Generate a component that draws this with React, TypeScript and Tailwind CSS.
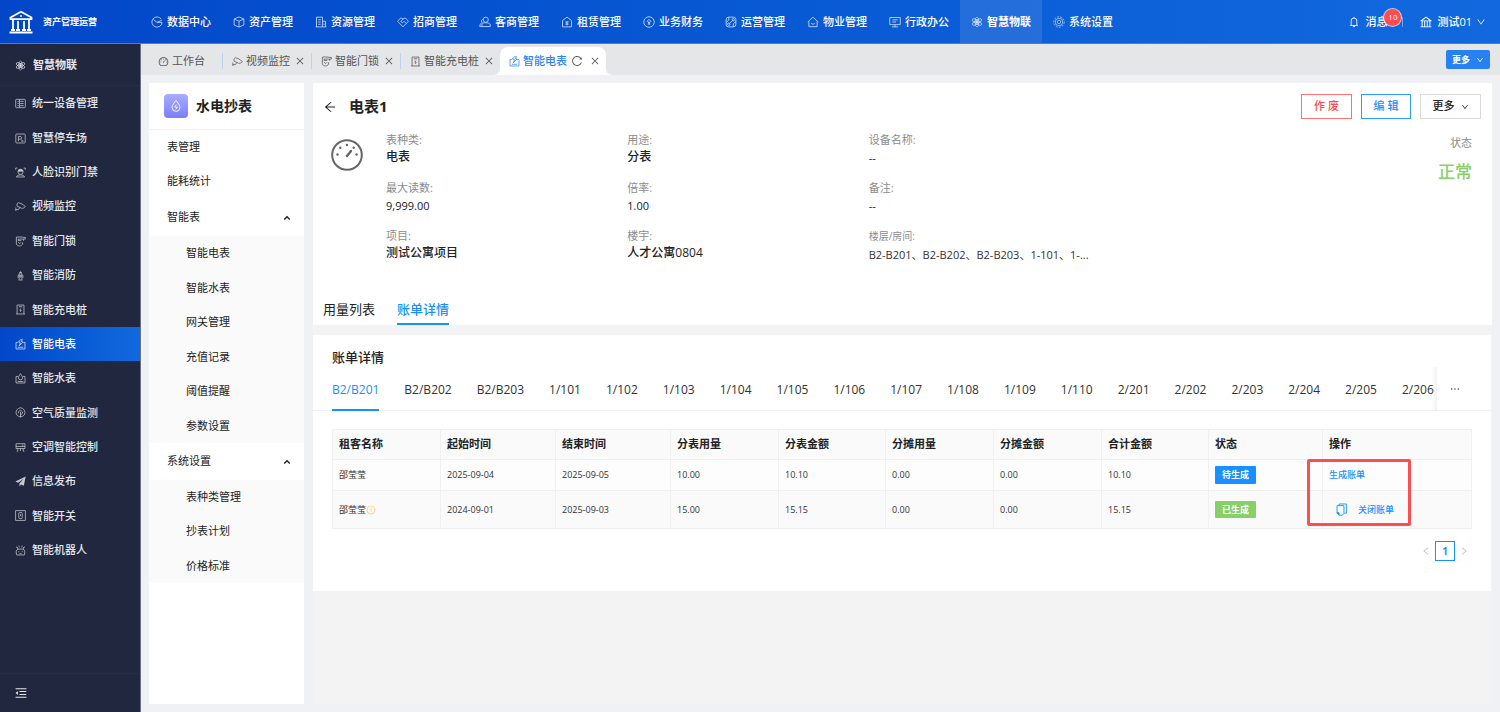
import { ReactNode, useState } from "react";
import {
  AiOutlineArrowLeft,
  AiOutlineBank,
  AiOutlineBell,
  AiOutlineClose,
  AiOutlineDashboard,
  AiOutlineDown,
  AiOutlineEllipsis,
  AiOutlineExclamationCircle,
  AiOutlineLeft,
  AiOutlineMenuFold,
  AiOutlineReload,
  AiOutlineRight,
} from "react-icons/ai";
import clsx from "clsx";

const shapes: Record<string, ReactNode> = {
  pie: (
    <>
      <path d="M13.500 4A6.800 6.800 0 1 0 14.800 8.500" />
      <path d="M3 4.500 8 8.500l6.500-3M8 8.500h6.500" />
    </>
  ),
  cube: (
    <>
      <path d="M8 1.200 14.500 4v8L8 14.800 1.500 12V4z" />
      <path d="M1.500 4 8 7l6.500-3M8 7v7.800" />
    </>
  ),
  building: (
    <>
      <path d="M2 14.500v-13h8v13M10 7h4v7.500M.8 14.500h14.400" />
      <path d="M4.300 5h3.400M4.300 8h3.400M4.300 11h3.400M12 10v2" />
    </>
  ),
  handshake: (
    <>
      <path d="M.8 7 5 2.500 8 4l3-1.500L15.200 7 8 14.500z" />
      <path d="M8 4 5 7.500 7.500 9 9.500 7l3 3" />
    </>
  ),
  tenant: (
    <>
      <circle cx="9" cy="5" r="3.400" />
      <path d="M4 14h11v-2.500c-1-2-3-2.500-6-2.500s-4 .5-5 2zM5 4.500C2.800 5 2.800 8 4.500 8.500 2.500 9.500 1 11 1 14h3" />
    </>
  ),
  house: (
    <>
      <path d="M2 14.500V6L8 1.500 14 6v8.500z" />
      <path d="M6 6.500 8 8.500l2-2M8 8.500v4M6 9.200h4M6 11h4" />
    </>
  ),
  money: (
    <>
      <circle cx="8" cy="8" r="7" />
      <path d="M5.500 7 8 4.500 10.500 7 8 9.500zM8 7v5M6.500 10.500h3" />
    </>
  ),
  ops: (
    <>
      <path d="M5 1.500h7a3 3 0 0 1 2.500 3v6.500a3.500 3.500 0 0 1-3.500 3.500H4.500a3 3 0 0 1-3-3V5A3.500 3.500 0 0 1 5 1.500z" />
      <path d="M5 1.500v4l-3.500 3M11 14.500v-4l3.500-3M6 10l4-4" />
      <circle cx="5" cy="11" r="1.600" />
      <circle cx="11" cy="5" r="1.600" />
    </>
  ),
  home: (
    <>
      <path d="M1 8 8 1.500 15 8M2.500 7v7.200h11V7" />
      <path d="M5.500 9.500c1 2 4 2 5 0" />
    </>
  ),
  screen: (
    <>
      <path d="M1 2h14v9.500H1zM8 11.500v3M4 14.500h8" />
      <path d="M4.500 5.200h7M4.500 8h5" />
    </>
  ),
  atom: (
    <g strokeWidth="0.9">
      <ellipse cx="8" cy="8" rx="7" ry="2.600" transform="rotate(30 8 8)" />
      <ellipse cx="8" cy="8" rx="7" ry="2.600" transform="rotate(-30 8 8)" />
      <ellipse cx="8" cy="8" rx="2.600" ry="6.500" />
      <circle cx="8" cy="8" r="1.600" fill="currentColor" />
    </g>
  ),
  gear: (
    <g strokeWidth="0.9">
      <circle cx="8" cy="8" r="7" strokeDasharray="2.600 1.600" />
      <circle cx="8" cy="8" r="5" />
      <circle cx="8" cy="8" r="2.300" />
    </g>
  ),
  device: (
    <>
      <rect x="1" y="2" width="14" height="12" rx="1" />
      <path d="M3.500 5h2M7.500 5h5M3.500 8h2M7.500 8h5M3.500 11h2M7.500 11h5M6.500 2v12" />
    </>
  ),
  parking: (
    <>
      <rect x="1.200" y="1.500" width="13.600" height="13" rx="1" />
      <path d="M5 12V5h2.500a2 2 0 0 1 0 4H5M9 11.800h3.500M9 9.500l2 1.500" />
    </>
  ),
  face: (
    <>
      <path d="M1 4V1.500h2.500M12.500 1.500H15V4M2 14.500c1-2 3-3 6-3s5 1 6 3z" />
      <circle cx="8" cy="7" r="3.800" />
      <path d="M4.500 6C5 3 11 3 11.500 6z" fill="currentColor" />
    </>
  ),
  camera: (
    <>
      <path d="M4.500 2.500c4 .5 7 2.500 10.500 5.500-1 2-3.500 3-5.500 2.500L3 7.500c-.5-2 0-4 1.500-5z" />
      <path d="M7 9.500 5 12.500H1.200M1.200 9.500v5" />
    </>
  ),
  lock: (
    <>
      <path d="M2 1.500h9M2 1.500v10c0 1.500 2.500 3 4.500 3s4.500-1.500 4.500-3V9" />
      <path d="M4.500 4.500H15V2H11M12.500 4.500V7M4.500 4.500v2H9M4.500 9 7 11l2-2" />
    </>
  ),
  fire: (
    <>
      <path d="M5 14.500h6M6 14V6c0-2 4-2 4 0v8M8 4.500V2M6 3.500h4M4.500 7.500h7M4.500 8v3.500M11.500 8v3.500" />
      <circle cx="8" cy="9.500" r="1" />
    </>
  ),
  charger: (
    <>
      <path d="M3 14.500v-13h10v13M1.500 14.500h13M5.500 4h5" />
      <path d="M8.500 6.500 7 9h2L7.800 11.500" />
    </>
  ),
  meter: (
    <>
      <path d="M4 5H1.500v9.500h13V5H12M4 12h8" />
      <path d="M8 1 5 4.500l3 1L6 10l5.500-5.500L9 3.500 11 1z" />
    </>
  ),
  water: (
    <>
      <path d="M4.500 5H1.500v9.500h13V5h-3M4 12.300h8" />
      <path d="M8 1C6.500 3.500 5 5 5 7a3 3 0 0 0 6 0c0-2-1.500-3.500-3-6z" />
    </>
  ),
  air: (
    <>
      <path d="M8 1c4 1 6.500 3.500 6.500 7S12 13.500 8 14.500C4 13.500 1.500 11.500 1.500 8S4 2 8 1z" />
      <path d="M8 15V7M8 11.500l3-2.500V7L8 4.500 5 7v2" />
    </>
  ),
  ac: (
    <>
      <path d="M1.500 2.500h13v7h-13zM1.500 6.500h13M10 4.700h2" />
      <path d="M4 9.500v4H2.500M8 9.500V13M12 9.500v4h1.500" />
    </>
  ),
  send: <path d="M15.500.8.500 8l4 1.800L12.500 4l-6 7v4.200l2.300-3 4 2z" fill="currentColor" stroke="none" />,
  toggle: (
    <>
      <rect x="1" y="1" width="14" height="14" />
      <rect x="5.500" y="3.500" width="5" height="9" rx="1.500" />
      <path d="M8 6v3" />
    </>
  ),
  robot: (
    <>
      <path d="M2.500 14.500c-1.500-4-1-7.500 2-8.500h7c3 1 3.500 4.500 2 8.500z" />
      <path d="M4.500 6 3 3M11.500 6 13 3M1.500 2.500l2 1.500M14.500 2.500l-2 1.500M6.500 3.500 5.500 1M9.500 3.500l1-2.500M5.500 9v1.500M10.500 9v1.500M6.500 12.500h3" />
    </>
  ),
  copy: (
    <>
      <path d="M5 3V1.200h9v11.300h-2.500" />
      <path d="M2.500 3.200H11v9.500L9 15H5l-2.500-2.500z" />
      <path d="M2.500 12H5v3z" fill="currentColor" />
    </>
  ),
};

const Icon = ({ name, className }: { name: string; className?: string }) => (
  <svg
    viewBox="0 0 16 16"
    fill="none"
    stroke="currentColor"
    strokeWidth="1.1"
    aria-hidden="true"
    className={clsx("shrink-0", className)}
  >
    {shapes[name]}
  </svg>
);

const topNav = [
  { icon: "pie", label: "数据中心" },
  { icon: "cube", label: "资产管理" },
  { icon: "building", label: "资源管理" },
  { icon: "handshake", label: "招商管理" },
  { icon: "tenant", label: "客商管理" },
  { icon: "house", label: "租赁管理" },
  { icon: "money", label: "业务财务" },
  { icon: "ops", label: "运营管理" },
  { icon: "home", label: "物业管理" },
  { icon: "screen", label: "行政办公" },
  { icon: "atom", label: "智慧物联" },
  { icon: "gear", label: "系统设置" },
];

const sideNav = [
  { icon: "device", label: "统一设备管理" },
  { icon: "parking", label: "智慧停车场" },
  { icon: "face", label: "人脸识别门禁" },
  { icon: "camera", label: "视频监控" },
  { icon: "lock", label: "智能门锁" },
  { icon: "fire", label: "智能消防" },
  { icon: "charger", label: "智能充电桩" },
  { icon: "meter", label: "智能电表" },
  { icon: "water", label: "智能水表" },
  { icon: "air", label: "空气质量监测" },
  { icon: "ac", label: "空调智能控制" },
  { icon: "send", label: "信息发布" },
  { icon: "toggle", label: "智能开关" },
  { icon: "robot", label: "智能机器人" },
];

const openTabs = [
  { icon: "camera", label: "视频监控" },
  { icon: "lock", label: "智能门锁" },
  { icon: "charger", label: "智能充电桩" },
];

const details = [
  { label: "表种类:", value: "电表" },
  { label: "用途:", value: "分表" },
  { label: "设备名称:", value: "--" },
  { label: "最大读数:", value: "9,999.00" },
  { label: "倍率:", value: "1.00" },
  { label: "备注:", value: "--" },
  { label: "项目:", value: "测试公寓项目" },
  { label: "楼宇:", value: "人才公寓0804" },
];

const rooms = [
  "B2/B201", "B2/B202", "B2/B203", "1/101", "1/102", "1/103", "1/104", "1/105", "1/106", "1/107",
  "1/108", "1/109", "1/110", "2/201", "2/202", "2/203", "2/204", "2/205", "2/206",
];

const columns = [
  { title: "租客名称", width: "w-[108px]" },
  { title: "起始时间", width: "w-[115px]" },
  { title: "结束时间", width: "w-[115px]" },
  { title: "分表用量", width: "w-[108px]" },
  { title: "分表金额", width: "w-[107px]" },
  { title: "分摊用量", width: "w-[108px]" },
  { title: "分摊金额", width: "w-[108px]" },
  { title: "合计金额", width: "w-[107px]" },
  { title: "状态", width: "w-[114px]" },
  { title: "操作", width: "" },
];

const Header = () => (
  <header className="flex h-11 items-center border-b border-[#3f7fe4] bg-linear-to-r from-[#0347c9] to-[#1269de] text-white">
    <div className="flex w-[140px] shrink-0 items-center gap-2.5 pl-[9px]">
      <svg viewBox="0 0 24 24" className="size-6" fill="none" stroke="currentColor" strokeWidth="1.8" aria-hidden="true">
        <path d="M1.500 7.500 12 1.800 22.500 7.500v1.700h-21zM.5 22.500h23M4 10v10M9 11v9M15 11v9M20 10v10M2 20h4M7 20h4M13 20h4M18 20h4" />
        <circle cx="12" cy="6" r="1" fill="currentColor" stroke="none" />
      </svg>
      <span className="text-[9px] font-bold">资产管理运营</span>
    </div>
    <nav className="flex h-full">
      {topNav.map((item) => (
        <a
          key={item.label}
          href="#"
          className={clsx(
            "flex w-[82px] items-center justify-center gap-1 pt-px text-[11px] whitespace-nowrap",
            item.label === "智慧物联" ? "bg-white/10 font-bold" : "font-medium"
          )}
        >
          <Icon name={item.icon} className="size-3 opacity-80" />
          {item.label}
        </a>
      ))}
    </nav>
    <div className="ml-auto flex items-center pt-px pr-3.5 text-[11px] font-medium">
      <button className="relative flex items-center gap-[5px]">
        <AiOutlineBell className="size-3" />
        消息
        <span className="absolute -top-[5px] left-9 flex size-[17px] items-center justify-center rounded-full bg-[#ff4d4f] text-[8px] ring-1 ring-white/70">
          10
        </span>
      </button>
      <span className="mx-4 ml-[15px] h-2.5 w-px bg-white/40" />
      <button className="flex items-center gap-1">
        <AiOutlineBank className="size-3.5" />
        测试01
        <AiOutlineDown className="size-2.5" />
      </button>
    </div>
  </header>
);

const Sidebar = () => (
  <aside className="flex w-[141px] shrink-0 flex-col border-r border-[#6b7182] bg-[#20273f] text-[11px] text-[#e4e6ec]">
    <div className="flex h-[42px] items-center gap-[7px] border-b border-[#292d3c] pt-px pl-[15px] font-bold">
      <Icon name="atom" className="size-[11px]" />
      智慧物联
    </div>
    <nav className="grid h-[481px] auto-rows-fr">
      {sideNav.map((item) => (
        <a
          key={item.label}
          href="#"
          className={clsx(
            "flex items-center gap-1.5 pt-px pl-[15px] font-medium",
            item.label === "智能电表" && "bg-linear-to-r from-[#0347c9] to-[#1269de] text-white"
          )}
        >
          <Icon name={item.icon} className="size-[11px] opacity-85" />
          {item.label}
        </a>
      ))}
    </nav>
    <div className="mt-auto flex h-[39px] items-center border-t border-[#292d3c] pl-3.5">
      <button aria-label="收起菜单">
        <AiOutlineMenuFold className="size-3.5" />
      </button>
    </div>
  </aside>
);

const TabBar = () => (
  <div className="flex h-[31px] items-end justify-between bg-[#e5e6e8] pr-[10px] text-[11px] text-[#555]">
    <div className="flex h-7 items-center">
      <button className="flex w-[81px] items-center gap-[3px] pl-[17px]">
        <AiOutlineDashboard className="size-[11px]" />
        工作台
      </button>
      {openTabs.map((tab) => (
        <div key={tab.label} className="flex items-center border-l border-[#b9d3f5] pr-1.5 pl-[9px]">
          <button className="flex items-center gap-[3px]">
            <Icon name={tab.icon} className="size-[11px]" />
            {tab.label}
          </button>
          <button aria-label="关闭" className="ml-[5px]">
            <AiOutlineClose className="size-2.5" />
          </button>
        </div>
      ))}
      <div className="relative flex h-7 items-center rounded-t-lg bg-white pr-1.5 pl-[9px]">
        <button className="flex items-center gap-[3px] font-medium text-[#2b82f0]">
          <Icon name="meter" className="size-[11px]" />
          智能电表
        </button>
        <button aria-label="刷新" className="ml-1">
          <AiOutlineReload className="size-3" />
        </button>
        <button aria-label="关闭" className="ml-[7px]">
          <AiOutlineClose className="size-2.5" />
        </button>
        <span className="absolute bottom-0 left-full size-[5px] bg-[radial-gradient(circle_at_top_right,transparent_4px,white_5px)]" />
        <span className="absolute right-full bottom-0 size-[5px] bg-[radial-gradient(circle_at_top_left,transparent_4px,white_5px)]" />
      </div>
    </div>
    <button className="mb-1.5 flex h-[19px] w-11 items-center justify-center gap-1.5 rounded-xs bg-[#2781f2] text-[9px] font-bold text-white">
      更多
      <AiOutlineDown className="size-2" />
    </button>
  </div>
);

const MenuGroup = ({ title, className, items }: { title: string; className: string; items: string[] }) => {
  const [open, setOpen] = useState(true);
  return (
    <>
      <button
        onClick={() => setOpen(!open)}
        className="flex h-[37px] w-full items-center justify-between pr-[13px] pl-[18px]"
      >
        {title}
        <svg viewBox="0 0 10 10" className={clsx("size-2", !open && "rotate-180")} fill="none" stroke="currentColor" strokeWidth="1.8">
          <path d="M1.500 7 5 3.500 8.500 7" />
        </svg>
      </button>
      {open && (
        <ul className={clsx("grid auto-rows-fr bg-[#fafafa]", className)}>
          {items.map((item) => (
            <li key={item} className="flex items-center pl-[37px]">
              <a href="#">{item}</a>
            </li>
          ))}
        </ul>
      )}
    </>
  );
};

const SubMenu = () => (
  <aside className="w-[155px] shrink-0 bg-white text-[11px] text-[#222]">
    <div className="flex h-[47px] items-center gap-2 border-b border-[#f0f0f0] pl-[15px]">
      <span className="flex size-6 items-center justify-center rounded-sm bg-linear-to-b from-[#a9adff] to-[#7b7dfb] text-white">
        <svg viewBox="0 0 16 16" className="size-3.5" fill="none" stroke="currentColor" aria-hidden="true">
          <path d="M8 1.500C6 4.500 3.500 6.500 3.500 9.700a4.500 4.500 0 0 0 9 0C12.500 6.500 10 4.500 8 1.500z" />
          <path d="M8.500 6.500 6.500 9.200h3L7.700 12" />
        </svg>
      </span>
      <h2 className="text-sm font-bold">水电抄表</h2>
    </div>
    <a href="#" className="flex h-[34px] items-center pl-[18px]">
      表管理
    </a>
    <a href="#" className="mb-px flex h-[34px] items-center pl-[18px]">
      能耗统计
    </a>
    <MenuGroup
      title="智能表"
      className="h-[207px]"
      items={["智能电表", "智能水表", "网关管理", "充值记录", "阈值提醒", "参数设置"]}
    />
    <MenuGroup title="系统设置" className="h-[103px]" items={["表种类管理", "抄表计划", "价格标准"]} />
  </aside>
);

const MeterSummary = () => (
  <section className="bg-white">
    <div className="flex items-center pt-[11px] pr-[11px] pl-2.5 text-[11px]">
      <button aria-label="返回">
        <AiOutlineArrowLeft className="size-3.5" />
      </button>
      <h1 className="ml-3 text-[15px] font-bold text-[#222]">电表1</h1>
      <div className="ml-auto flex items-center gap-[9px] font-medium">
        <button className="h-[25px] w-[51px] border border-[#ff7072] text-[#ff4d4f]">作 废</button>
        <button className="h-[25px] w-[50px] border border-[#2e9bff] text-[#1890ff]">编 辑</button>
        <button className="flex h-[25px] w-[61px] items-center justify-center gap-1.5 border border-[#d9d9d9]">
          更多
          <AiOutlineDown className="size-2" />
        </button>
      </div>
    </div>
    <div className="flex gap-[23px] pt-3 pr-5 pl-[18px]">
      <svg viewBox="0 0 32 32" className="mt-2 size-8 shrink-0 text-[#666]" fill="none" stroke="currentColor" aria-hidden="true">
        <circle cx="16" cy="16" r="14.800" strokeWidth="2" />
        <path d="M16 17 20 12" strokeWidth="2.400" strokeLinecap="round" />
        <g fill="currentColor" stroke="none">
          <circle cx="6.500" cy="15.500" r="1.200" />
          <circle cx="9.300" cy="8.800" r="1.200" />
          <circle cx="16" cy="6" r="1.200" />
          <circle cx="22.700" cy="8.800" r="1.200" />
          <circle cx="25.500" cy="15.500" r="1.200" />
        </g>
      </svg>
      <dl className="grid flex-1 grid-cols-[2fr_2fr_2fr_3fr] gap-y-3 leading-[18px]">
        {details.map((item, index) => (
          <div key={item.label} className={clsx(index % 3 === 0 && "col-start-1")}>
            <dt className="text-[11px] text-[#8c8c8c]">{item.label}</dt>
            <dd className={clsx("text-[#222]", /^[\d-]/.test(item.value) ? "text-[11px]" : "text-xs font-medium")}>
              {item.value}
            </dd>
          </div>
        ))}
        <div>
          <dt className="text-[10px] text-[#8c8c8c]">楼层/房间:</dt>
          <dd className="text-[11px] leading-5 whitespace-nowrap text-[#333]">
            B2-B201、B2-B202、B2-B203、1-101、1-...
          </dd>
        </div>
        <div className="col-start-4 row-start-1 row-end-3 pt-[3px] text-right">
          <dt className="text-[11px] text-[#8c8c8c]">状态</dt>
          <dd className="mt-2 text-[17px] leading-6 font-medium text-[#87d068]">正常</dd>
        </div>
      </dl>
    </div>
    <div role="tablist" className="flex gap-[22px] pt-[34px] pl-2.5 text-[13px]">
      <button role="tab" aria-selected="false" className="border-b-2 border-transparent pb-1 leading-5 text-[#222]">
        用量列表
      </button>
      <button role="tab" aria-selected="true" className="border-b-2 border-[#1890ff] pb-1 leading-5 font-medium text-[#1890ff]">
        账单详情
      </button>
    </div>
  </section>
);

const cell = "border border-[#f0f0f0] px-1.5";

const BillTable = () => (
  <table className="w-full table-fixed border-collapse text-left text-[9px] text-[#333]">
    <thead className="bg-[#fafafa] text-[11px] text-[#222]">
      <tr className="h-[30px]">
        {columns.map((column) => (
          <th key={column.title} className={clsx("border border-[#f0f0f0] px-1.5 font-bold", column.width)}>
            {column.title}
          </th>
        ))}
      </tr>
    </thead>
    <tbody>
      <tr className="h-[31px] bg-[#fdfdfd]">
        {["邵莹莹", "2025-09-04", "2025-09-05", "10.00", "10.10", "0.00", "0.00", "10.10"].map((value, i) => (
          <td key={i} className={cell}>
            {value}
          </td>
        ))}
        <td className={cell}>
          <span className="flex h-[18px] w-[41px] items-center justify-center rounded-[1px] bg-[#1890ff] font-bold text-white">
            待生成
          </span>
        </td>
        <td className={clsx(cell, "relative")}>
          <a href="#" className="font-medium text-[#1890ff]">
            生成账单
          </a>
          <span className="pointer-events-none absolute -top-px -left-4 h-[67px] w-[104px] rounded-xs border-3 border-[#fb5052]" />
        </td>
      </tr>
      <tr className="h-[38px] bg-[#fafafa]">
        {["邵莹莹", "2024-09-01", "2025-09-03", "15.00", "15.15", "0.00", "0.00", "15.15"].map((value, i) => (
          <td key={i} className={cell}>
            <span className="flex items-center">
              {value}
              {i === 0 && <AiOutlineExclamationCircle className="size-2.5 text-[#ffc069]" />}
            </span>
          </td>
        ))}
        <td className={cell}>
          <span className="flex h-[17px] w-[41px] items-center justify-center rounded-[1px] bg-[#87d068] font-bold text-white">
            已生成
          </span>
        </td>
        <td className={cell}>
          <div className="flex items-center gap-2.5 pl-1.5 text-[#1890ff]">
            <button aria-label="复制">
              <Icon name="copy" className="size-[13px]" />
            </button>
            <a href="#" className="font-medium">
              关闭账单
            </a>
          </div>
        </td>
      </tr>
    </tbody>
  </table>
);

const BillDetail = () => {
  const [room, setRoom] = useState("B2/B201");
  return (
    <section className="mr-px mt-2.5 bg-white pt-3 pb-[30px]">
      <h3 className="pl-[19px] text-[13px] leading-5 font-medium text-[#222]">账单详情</h3>
      <div className="flex h-11 border-b border-[#f0f0f0] pl-[19px]">
        <div role="tablist" className="relative -mb-px flex min-w-0 flex-1 gap-[25px] overflow-hidden text-xs text-[#333]">
          {rooms.map((item) => (
            <button
              key={item}
              role="tab"
              aria-selected={item === room}
              onClick={() => setRoom(item)}
              className={clsx(
                "shrink-0 border-b-2 pt-1",
                item === room ? "border-[#1890ff] text-[#1890ff]" : "border-transparent"
              )}
            >
              {item}
            </button>
          ))}
          <span className="absolute inset-y-0 right-0 w-1.5 bg-linear-to-r from-transparent to-black/5" />
        </div>
        <button aria-label="更多房间" className="flex w-[54px] items-center pl-3">
          <AiOutlineEllipsis className="size-3" />
        </button>
      </div>
      <div className="px-[19px] pt-[18px]">
        <BillTable />
        <div className="mt-3 flex items-center justify-end gap-1 pr-[3px] text-[10px] text-[#bfbfbf]">
          <button aria-label="上一页">
            <AiOutlineLeft className="size-2.5" />
          </button>
          <button className="size-5 border border-[#1890ff] font-bold text-[#1890ff]">1</button>
          <button aria-label="下一页">
            <AiOutlineRight className="size-2.5" />
          </button>
        </div>
      </div>
    </section>
  );
};

const App = () => (
  <div className="flex h-screen flex-col overflow-hidden bg-[#eff1f5] font-['Open_Sans','Noto_Sans_CJK_SC',sans-serif] text-[#222]">
    <Header />
    <div className="flex min-h-0 flex-1">
      <Sidebar />
      <div className="flex min-w-0 flex-1 flex-col">
        <TabBar />
        <div className="flex min-h-0 flex-1 gap-[9px] p-2">
          <SubMenu />
          <main className="min-w-0 flex-1 bg-[#f3f3f3]">
            <MeterSummary />
            <BillDetail />
          </main>
        </div>
      </div>
    </div>
  </div>
);

export default App;
